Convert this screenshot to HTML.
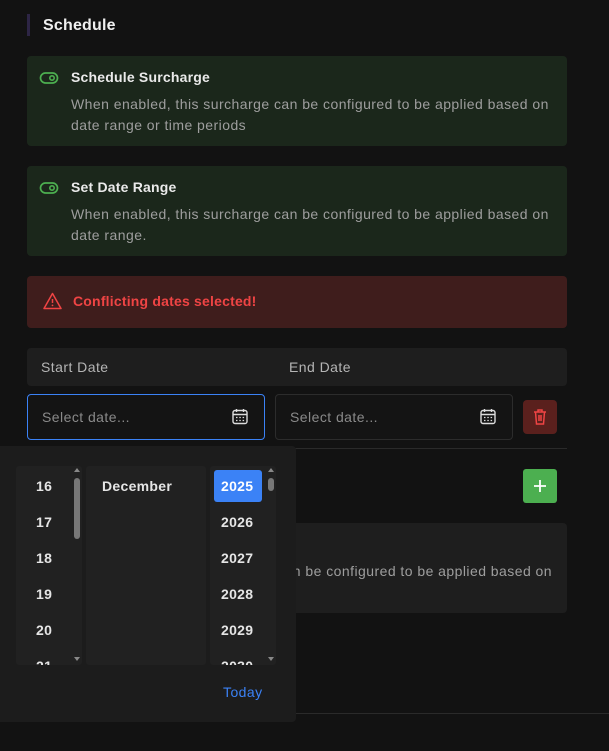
<!DOCTYPE html>
<html><head><style>
*{box-sizing:border-box;margin:0;padding:0}
body{width:609px;height:751px;background:#121212;font-family:"Liberation Sans",sans-serif;position:relative;overflow:hidden;color:#e5e5e5;letter-spacing:.45px}
.a{position:absolute}
.card{position:absolute;left:27px;width:540px;height:90px;border-radius:4px;background:#1b271b}
.ttl{position:absolute;left:44px;top:13px;font-size:14px;font-weight:bold;color:#eaeaea;letter-spacing:.2px}
.desc{position:absolute;left:44px;top:38px;width:490px;font-size:14px;line-height:21px;color:#9e9e9e}
.tg{position:absolute;left:12px;top:15px}
.inp{position:absolute;top:394px;width:238px;height:46px;border:1px solid #2c2c2c;border-radius:4px;background:#141414}
.inp span{position:absolute;left:14px;top:14px;font-size:14px;color:#8a8a8a}
.inp svg{position:absolute;right:16px;top:13px}
.col{position:absolute;top:466px;height:199px;background:#212121;overflow:hidden;border-radius:3px}
.n{position:absolute;font-size:14px;font-weight:bold;color:#e5e5e5;letter-spacing:.3px}
</style></head><body>
<div class="a" style="left:27px;top:14px;width:3px;height:22px;background:#2d2545"></div>
<div class="a" style="left:43px;top:17px;font-size:16px;font-weight:bold;color:#f0f0f0;letter-spacing:.2px">Schedule</div>

<div class="card" style="top:56px">
<svg class="tg" width="20" height="14" viewBox="0 0 20 14"><rect x="1.5" y="2" width="17" height="10" rx="5" fill="none" stroke="#4caf50" stroke-width="1.7"/><circle cx="13" cy="7" r="2.2" fill="none" stroke="#4caf50" stroke-width="1.6"/></svg>
<div class="ttl">Schedule Surcharge</div>
<div class="desc">When enabled, this surcharge can be configured to be applied based on date range or time periods</div></div>

<div class="card" style="top:166px">
<svg class="tg" width="20" height="14" viewBox="0 0 20 14"><rect x="1.5" y="2" width="17" height="10" rx="5" fill="none" stroke="#4caf50" stroke-width="1.7"/><circle cx="13" cy="7" r="2.2" fill="none" stroke="#4caf50" stroke-width="1.6"/></svg>
<div class="ttl">Set Date Range</div>
<div class="desc">When enabled, this surcharge can be configured to be applied based on date range.</div></div>

<div class="a" style="left:27px;top:276px;width:540px;height:52px;border-radius:4px;background:#3f1d1c">
<svg class="a" style="left:16px;top:16px" width="19" height="18" viewBox="0 0 19 18"><path d="M9.5 1.5 L18 16.5 H1 Z" fill="none" stroke="#ef4444" stroke-width="1.5" stroke-linejoin="round"/><path d="M9.5 7v4" stroke="#ef4444" stroke-width="1.5"/><circle cx="9.5" cy="13.4" r=".9" fill="#ef4444"/></svg>
<div class="a" style="left:46px;top:17px;font-size:14px;font-weight:bold;color:#ef4444;letter-spacing:.2px">Conflicting dates selected!</div></div>

<div class="a" style="left:27px;top:348px;width:540px;height:38px;border-radius:4px;background:#1e1e1e">
<div class="a" style="left:14px;top:11px;font-size:14px;color:#b5b5b5">Start Date</div>
<div class="a" style="left:262px;top:11px;font-size:14px;color:#b5b5b5">End Date</div></div>

<div class="inp" style="left:27px;border-color:#3b82f6"><span>Select date...</span>
<svg width="16" height="17" viewBox="0 0 16 17"><rect x="1" y="2.5" width="14" height="13" rx="2" fill="none" stroke="#ddd" stroke-width="1.4"/><path d="M1 6.5h14M4.5 1v3M11.5 1v3" stroke="#ddd" stroke-width="1.4"/><path d="M4 9.5h1.5M7.3 9.5h1.5M10.6 9.5h1.5M4 12.5h1.5M7.3 12.5h1.5M10.6 12.5h1.5" stroke="#ddd" stroke-width="1.2"/></svg></div>
<div class="inp" style="left:275px"><span>Select date...</span>
<svg width="16" height="17" viewBox="0 0 16 17"><rect x="1" y="2.5" width="14" height="13" rx="2" fill="none" stroke="#ddd" stroke-width="1.4"/><path d="M1 6.5h14M4.5 1v3M11.5 1v3" stroke="#ddd" stroke-width="1.4"/><path d="M4 9.5h1.5M7.3 9.5h1.5M10.6 9.5h1.5M4 12.5h1.5M7.3 12.5h1.5M10.6 12.5h1.5" stroke="#ddd" stroke-width="1.2"/></svg></div>

<div class="a" style="left:523px;top:400px;width:34px;height:34px;border-radius:4px;background:#5a201d">
<svg class="a" style="left:10px;top:8px" width="14" height="17" viewBox="0 0 14 17"><path d="M1 4h12M5 4V2h4v2M2.5 4l1 12h7l1-12M6 7v6M8 7v6" fill="none" stroke="#ef4444" stroke-width="1.5"/></svg></div>

<div class="a" style="left:0;top:448px;width:567px;height:1px;background:#2a2a2a"></div>

<div class="a" style="left:523px;top:469px;width:34px;height:34px;border-radius:3px;background:#4caf50">
<svg class="a" style="left:10px;top:10px" width="14" height="14"><path d="M7 1v12M1 7h12" stroke="#fff" stroke-width="1.8"/></svg></div>

<div class="a" style="left:27px;top:523px;width:540px;height:90px;border-radius:4px;background:#1e1e1e">
<div class="a" style="left:17px;top:40px;width:508px;text-align:right;font-size:14px;color:#9e9e9e;white-space:nowrap;direction:rtl"><span style="direction:ltr;unicode-bidi:embed">When enabled, this surcharge can be configured to be applied based on</span></div></div>

<div class="a" style="left:296px;top:713px;width:313px;height:1px;background:#2a2a2a"></div>

<div class="a" style="left:0;top:446px;width:296px;height:276px;background:#1c1c1c;border-radius:0 4px 4px 0">
</div>
<div class="col" style="left:16px;width:66px">
<div class="n" style="left:20px;top:12px">16</div><div class="n" style="left:20px;top:48px">17</div><div class="n" style="left:20px;top:84px">18</div><div class="n" style="left:20px;top:120px">19</div><div class="n" style="left:20px;top:156px">20</div><div class="n" style="left:20px;top:192px">21</div>
<div class="a" style="left:58px;top:12px;width:6px;height:61px;border-radius:3px;background:#777"></div>
<div class="a" style="left:58px;top:2px;width:0;height:0;border:3px solid transparent;border-bottom:4px solid #888;border-top:0"></div>
<div class="a" style="left:58px;top:191px;width:0;height:0;border:3px solid transparent;border-top:4px solid #888;border-bottom:0"></div>
</div>
<div class="col" style="left:86px;width:120px"><div class="n" style="left:16px;top:12px">December</div></div>
<div class="col" style="left:210px;width:66px">
<div class="a" style="left:4px;top:4px;width:48px;height:32px;border-radius:3px;background:#3b82f6"></div>
<div class="n" style="left:11px;top:12px;color:#fff">2025</div><div class="n" style="left:11px;top:48px">2026</div><div class="n" style="left:11px;top:84px">2027</div><div class="n" style="left:11px;top:120px">2028</div><div class="n" style="left:11px;top:156px">2029</div><div class="n" style="left:11px;top:192px">2030</div>
<div class="a" style="left:58px;top:12px;width:6px;height:13px;border-radius:3px;background:#777"></div>
<div class="a" style="left:58px;top:2px;width:0;height:0;border:3px solid transparent;border-bottom:4px solid #888;border-top:0"></div>
<div class="a" style="left:58px;top:191px;width:0;height:0;border:3px solid transparent;border-top:4px solid #888;border-bottom:0"></div>
</div>
<div class="a" style="left:223px;top:684px;font-size:14px;color:#3b82f6">Today</div>
</body></html>
